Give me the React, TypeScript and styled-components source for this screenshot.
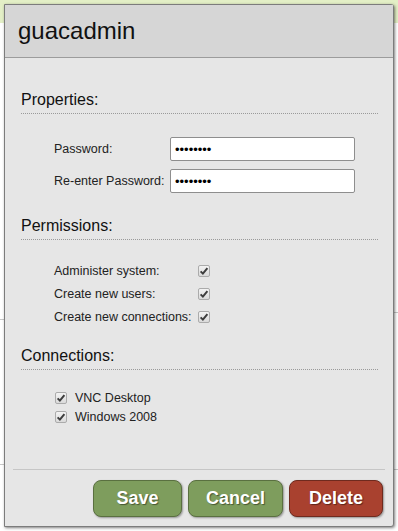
import { Fragment } from 'react';
import styled, { createGlobalStyle } from 'styled-components';

const GlobalStyle = createGlobalStyle`
  html, body {
    margin: 0;
    padding: 0;
    background: #ffffff;
    font-family: "Liberation Sans", Arial, sans-serif;
  }
`;

// page behind the dialog
const Page = styled.div`
  position: relative;
  width: 398px;
  height: 531px;
  overflow: hidden;
  background: #ffffff;
`;

const TopBar = styled.div`
  height: 23px;
  background: #e3efc6;
`;

const BackColumns = styled.div`
  display: flex;
  justify-content: space-between;
`;

const BackColumn = styled.div`
  width: 60px;
  display: flex;
  flex-direction: column;
`;

const BackRule = styled.div<{ gap: number }>`
  margin-top: ${(p) => p.gap}px;
  border-top: 1px solid #c8c8c8;
`;

// dialog
const Dialog = styled.div`
  position: absolute;
  top: 4px;
  left: 4px;
  width: 390px;
  height: 523px;
  box-sizing: border-box;
  display: flex;
  flex-direction: column;
  background: #e6e6e6;
  border: 1px solid #7c7c7c;
  border-radius: 0 3px 3px 0;
  box-shadow: 1px 1px 3px rgba(0, 0, 0, 0.5);
`;

const Header = styled.div`
  height: 52px;
  display: flex;
  align-items: center;
  padding-left: 13px;
  background: #d6d6d6;
  border-bottom: 1px solid #9c9c9c;
`;

const Title = styled.h1`
  margin: 0;
  font-size: 24px;
  font-weight: normal;
  color: #111111;
`;

const Body = styled.div`
  padding: 0 15px 0 16px;
`;

const SectionTitle = styled.h2<{ gap: number }>`
  margin: ${(p) => p.gap}px 0 0;
  padding-bottom: 4px;
  font-size: 16px;
  line-height: 18px;
  font-weight: normal;
  color: #111111;
  border-bottom: 1px dotted #9a9a9a;
`;

const FieldGrid = styled.div`
  display: grid;
  grid-template-columns: 116px 185px;
  row-gap: 8px;
  margin: 23px 0 0 33px;
`;

const Label = styled.label`
  display: flex;
  align-items: center;
  font-size: 12.5px;
  color: #222222;
`;

const PasswordInput = styled.input`
  width: 185px;
  height: 24px;
  box-sizing: border-box;
  margin: 0;
  padding: 0 4px;
  font-family: "Liberation Sans", Arial, sans-serif;
  font-size: 13px;
  color: #000000;
  background: #ffffff;
  border: 1px solid #8e8e8e;
  border-radius: 2px;
  outline: none;
`;

const PermissionGrid = styled.div`
  display: grid;
  grid-template-columns: 144px 13px;
  grid-auto-rows: 23px;
  margin: 19px 0 0 33px;
`;

const ConnectionList = styled.div`
  display: flex;
  flex-direction: column;
  margin: 18px 0 0 34px;
`;

const ConnectionRow = styled.label`
  height: 19px;
  display: flex;
  align-items: center;
  gap: 8px;
  font-size: 12.5px;
  color: #222222;
`;

const CheckCell = styled.div`
  display: flex;
  align-items: center;
`;

const CheckBox = styled.span`
  width: 12px;
  height: 12px;
  box-sizing: border-box;
  display: inline-flex;
  align-items: center;
  justify-content: center;
  background: linear-gradient(#f3f3f3, #dadada);
  border: 1px solid #ababab;
  border-radius: 2px;
`;

const Footer = styled.div`
  margin: auto 8px 0;
  padding: 10px 2px 9px;
  display: flex;
  justify-content: flex-end;
  gap: 6px;
  border-top: 1px solid #c6c6c6;
`;

const Button = styled.button<{ danger?: boolean; width: number }>`
  width: ${(p) => p.width}px;
  height: 37px;
  padding: 0;
  font-family: "Liberation Sans", Arial, sans-serif;
  font-size: 18px;
  font-weight: bold;
  color: #ffffff;
  text-shadow: 1px 1px 1px rgba(0, 0, 0, 0.45);
  background: ${(p) => (p.danger ? '#a9412f' : '#7e9d5d')};
  border: 1px solid ${(p) => (p.danger ? '#6f2a1e' : '#5a7040')};
  border-radius: 8px;
  box-shadow: 1px 1px 2px rgba(0, 0, 0, 0.35);
`;

const Check = () => (
  <CheckBox>
    <svg width="10" height="10" viewBox="0 0 10 10">
      <path
        d="M1.6 5.4 L3.9 7.6 L8.4 2.2"
        fill="none"
        stroke="#3d3d3d"
        strokeWidth="2"
      />
    </svg>
  </CheckBox>
);

const permissions = [
  'Administer system:',
  'Create new users:',
  'Create new connections:',
];

const connections = ['VNC Desktop', 'Windows 2008'];

const App = () => {
  return (
    <Page>
      <GlobalStyle />
      <TopBar />
      <BackColumns>
        <BackColumn>
          <BackRule gap={296} />
          <BackRule gap={144} />
        </BackColumn>
        <BackColumn>
          <BackRule gap={289} />
          <BackRule gap={156} />
        </BackColumn>
      </BackColumns>

      <Dialog>
        <Header>
          <Title>{'guacadmin'}</Title>
        </Header>
        <Body>
          <SectionTitle gap={33}>{'Properties:'}</SectionTitle>
          <FieldGrid>
            <Label>{'Password:'}</Label>
            <PasswordInput type="password" value="password" readOnly />
            <Label>{'Re-enter Password:'}</Label>
            <PasswordInput type="password" value="password" readOnly />
          </FieldGrid>

          <SectionTitle gap={24}>{'Permissions:'}</SectionTitle>
          <PermissionGrid>
            {permissions.map((name) => (
              <Fragment key={name}>
                <Label>{name}</Label>
                <CheckCell>
                  <Check />
                </CheckCell>
              </Fragment>
            ))}
          </PermissionGrid>

          <SectionTitle gap={19}>{'Connections:'}</SectionTitle>
          <ConnectionList>
            {connections.map((name) => (
              <ConnectionRow key={name}>
                <Check />
                {name}
              </ConnectionRow>
            ))}
          </ConnectionList>
        </Body>
        <Footer>
          <Button width={89}>{'Save'}</Button>
          <Button width={95}>{'Cancel'}</Button>
          <Button width={94} danger>
            {'Delete'}
          </Button>
        </Footer>
      </Dialog>
    </Page>
  );
};

export default App;
